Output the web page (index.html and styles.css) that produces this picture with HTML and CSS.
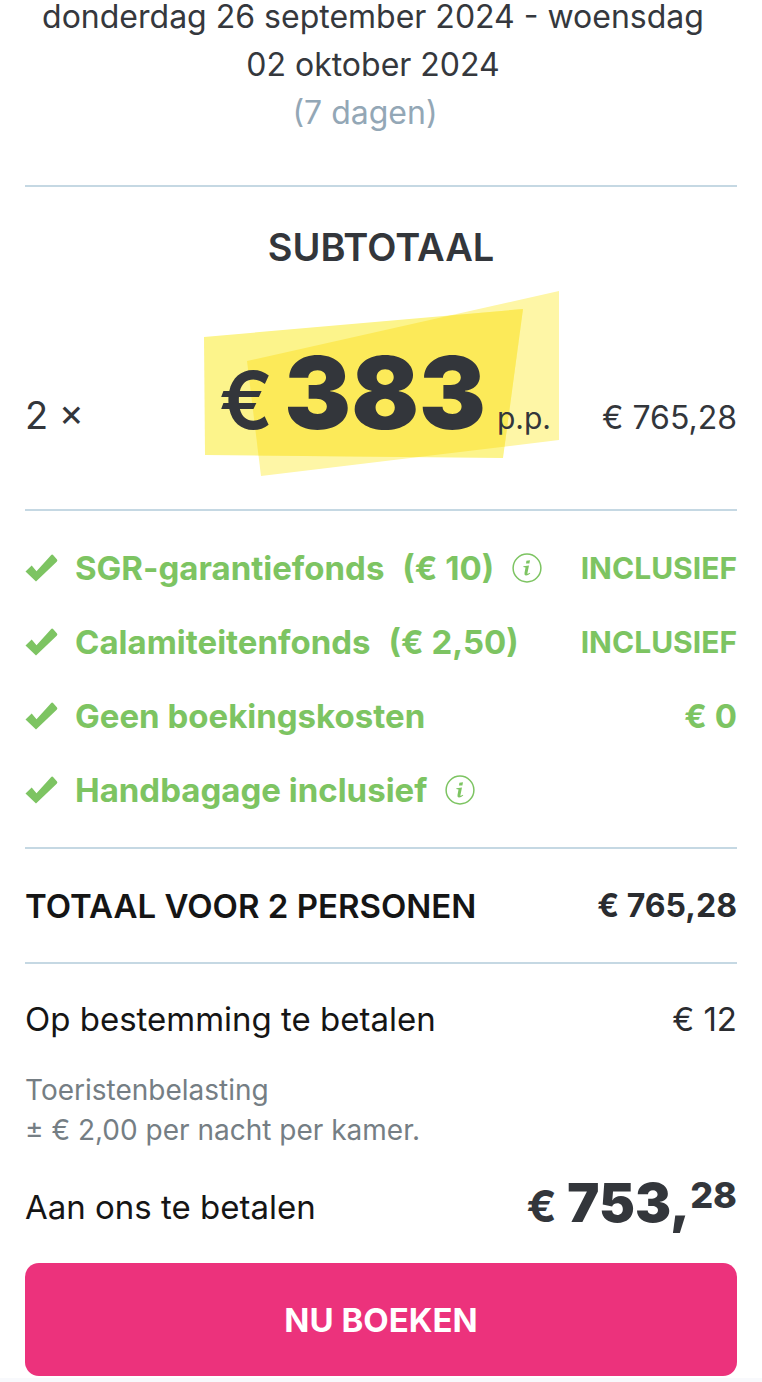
FILE: index.html
```html
<!DOCTYPE html>
<html lang="nl">
<head>
  <meta charset="UTF-8">
  <title>Jouw reis</title>
  <meta name="viewport" content="width=device-width, initial-scale=1.0">
  <link rel="stylesheet" href="styles.css">
</head>
<body>
<svg class="sprite" width="0" height="0" aria-hidden="true">
  <symbol id="check" viewBox="0 0 32 28">
    <path d="M0 17.5 6.2 11.5 11 17.2 25.5 1.2Q26.6 0 27.8 1.2L31.5 5.4Q32.4 6.6 31.2 7.8L10.5 27.5Z"/>
  </symbol>
  <symbol id="info" viewBox="0 0 30 30">
    <circle cx="15" cy="15" r="13.9" fill="none" stroke="currentColor" stroke-width="1.5"/>
    <path d="M14.4 7.7 18 7.2 17.4 10.4 14 10.6ZM11.4 13.2 17 12.4 15.4 20.2Q15.3 20.9 15.9 20.7L18 19.8 18.2 20.5Q15.6 22.8 13.7 22.5 12.1 22.2 12.5 20L13.5 14.4 11.3 14Z"/>
  </symbol>
</svg>

<main class="summary">
  <div class="dates">
    donderdag 26 september 2024 - woensdag 02 oktober 2024
    <div class="days">(7 dagen)</div>
  </div>

  <section class="subtotal">
    <h2>SUBTOTAAL</h2>
    <div class="price-row">
      <span class="count">2 ×</span>
      <div class="highlight">
        <svg class="marker" viewBox="0 0 356 186" aria-hidden="true">
          <clipPath id="overlap"><path d="M1 47 320 19 300 168 2 165Z"/></clipPath>
          <path d="M44 71 356 1V150L58 186Z" fill="#fef6a6"/>
          <path d="M1 47 320 19 300 168 2 165Z" fill="#fcf48b"/>
          <path d="M44 71 356 1V150L58 186Z" fill="#fcea59" clip-path="url(#overlap)"/>
        </svg>
        <span class="euro">€</span>
        <span class="amount">383</span>
        <span class="pp">p.p.</span>
      </div>
      <span class="sum">€ 765,28</span>
    </div>
  </section>

  <ul class="included">
    <li>
      <svg class="check"><use href="#check"/></svg>
      <span>SGR-garantiefonds</span>
      <span class="fee">(€ 10)</span>
      <button class="info" aria-label="Info SGR-garantiefonds"><svg><use href="#info"/></svg></button>
      <span class="value upper">INCLUSIEF</span>
    </li>
    <li>
      <svg class="check"><use href="#check"/></svg>
      <span>Calamiteitenfonds</span>
      <span class="fee">(€ 2,50)</span>
      <span class="value upper">INCLUSIEF</span>
    </li>
    <li>
      <svg class="check"><use href="#check"/></svg>
      <span>Geen boekingskosten</span>
      <span class="value">€ 0</span>
    </li>
    <li>
      <svg class="check"><use href="#check"/></svg>
      <span>Handbagage inclusief</span>
      <button class="info" aria-label="Info handbagage"><svg><use href="#info"/></svg></button>
    </li>
  </ul>

  <div class="row total">
    <span>TOTAAL VOOR 2 PERSONEN</span>
    <strong>€ 765,28</strong>
  </div>

  <div class="row local">
    <span>Op bestemming te betalen</span>
    <span class="dark">€ 12</span>
  </div>
  <p class="note">Toeristenbelasting<br>± € 2,00 per nacht per kamer.</p>

  <div class="row pay">
    <span>Aan ons te betalen</span>
    <div class="pay-price"><span class="pay-euro">€</span> 753,<sup>28</sup></div>
  </div>

  <button class="book">NU BOEKEN</button>
</main>
<footer class="strip"></footer>
</body>
</html>
```
FILE: styles.css
```css
* {
  box-sizing: border-box;
}
body {
  margin: 0;
  font-family: Inter, "Liberation Sans", sans-serif;
  font-size: 32px;
  color: #151515;
  background: #fff;
}
h2, p, ul {
  margin: 0;
  padding: 0;
}
button {
  font-family: inherit;
  border: none;
  cursor: pointer;
}
.sprite {
  position: absolute;
}
.summary {
  padding: 0 25px;
}
.dates {
  margin-top: -7px;
  padding: 0 16px 48px 0;
  line-height: 48px;
  text-align: center;
  color: #35383d;
  border-bottom: 2px solid #c5d8e3;
}
.days {
  padding-right: 16px;
  color: #93a7b6;
}
.subtotal {
  padding: 36px 0 33px;
  color: #33363b;
  border-bottom: 2px solid #c5d8e3;
}
.subtotal h2 {
  font-size: 38px;
  line-height: 48px;
  font-weight: 600;
  text-align: center;
}
.price-row {
  display: grid;
  grid-template-columns: 1fr auto 1fr;
  align-items: baseline;
  margin-top: 19px;
}
.count {
  font-size: 38px;
}
.sum {
  text-align: right;
}
.highlight {
  position: relative;
  display: flex;
  align-items: baseline;
  justify-content: space-between;
  width: 356px;
  height: 186px;
  padding: 43px 8px 0 16px;
}
.marker {
  position: absolute;
  top: 0;
  left: 0;
  width: 100%;
  height: 100%;
}
.euro, .amount, .pp {
  position: relative;
}
.euro {
  font-size: 80px;
  font-weight: 600;
}
.amount {
  font-size: 100px;
  line-height: 120px;
  font-weight: 900;
}
.pp {
  font-size: 30px;
}
.included {
  padding: 20px 0;
  list-style: none;
  font-size: 33px;
  font-weight: 700;
  color: #7dc462;
  border-bottom: 2px solid #c5d8e3;
}
.included li {
  display: flex;
  align-items: center;
  height: 74px;
}
.check {
  width: 33px;
  height: 28px;
  margin-right: 17px;
  fill: currentColor;
}
.fee {
  margin-left: 18px;
}
.info {
  display: flex;
  margin-left: 18px;
  padding: 0;
  color: inherit;
  background: none;
}
.info svg {
  width: 30px;
  height: 30px;
  fill: currentColor;
}
.value {
  margin-left: auto;
}
.upper {
  font-size: 30px;
}
.row {
  display: flex;
  justify-content: space-between;
  align-items: center;
  font-size: 33px;
}
.total {
  height: 115px;
  font-weight: 600;
  border-bottom: 2px solid #c5d8e3;
}
.total strong {
  font-size: 32px;
  font-weight: 700;
  color: #2a2c30;
}
.local {
  height: 106px;
  padding-top: 4px;
}
.dark {
  color: #2a2c30;
}
.note {
  font-size: 28px;
  line-height: 40px;
  color: #757e84;
}
.pay {
  height: 113px;
}
.pay-price {
  padding-bottom: 4px;
  font-size: 54px;
  line-height: 64px;
  font-weight: 900;
  color: #33363b;
}
.pay-euro {
  font-size: 44px;
  font-weight: 700;
}
.pay-price sup {
  font-size: 36px;
  line-height: 0;
  font-weight: 800;
  vertical-align: 14px;
}
.book {
  display: block;
  width: 100%;
  height: 113px;
  font-size: 33px;
  font-weight: 700;
  color: #fff;
  background: #ec327c;
  border-radius: 14px;
}
.strip {
  height: 4px;
  margin-top: 2px;
  background: #f8f9fc;
}
```
